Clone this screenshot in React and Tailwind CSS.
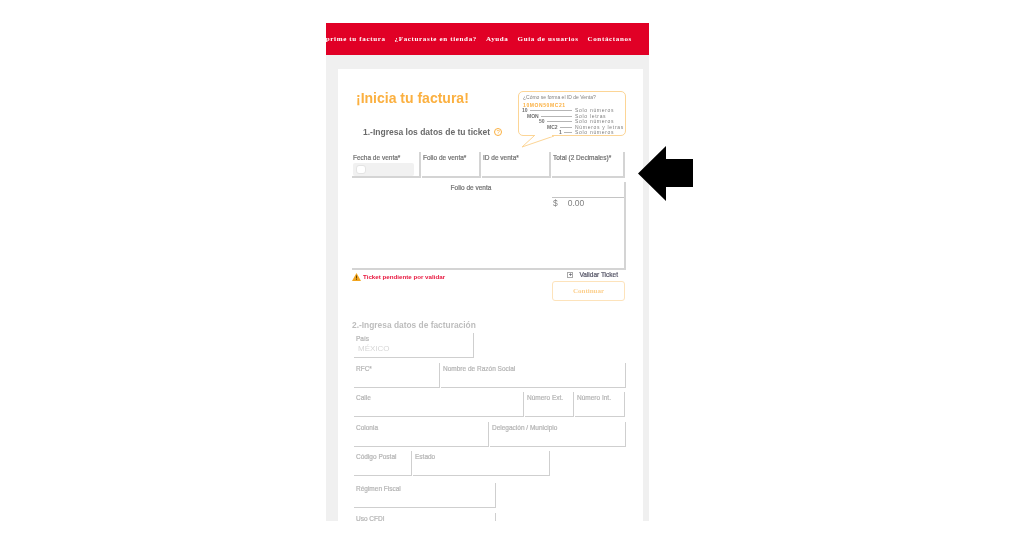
import React from "react";

const navItems = ["Imprime tu factura", "¿Facturaste en tienda?", "Ayuda", "Guía de usuarios", "Contáctanos"];

const idRows = [
  { code: "10", text: "Solo números", pad: "pl-0" },
  { code: "MON", text: "Solo letras", pad: "pl-[5px]" },
  { code: "50", text: "Solo números", pad: "pl-[17px]" },
  { code: "MC2", text: "Números y letras", pad: "pl-[25px]" },
  { code: "1", text: "Solo números", pad: "pl-[37px]" },
];

const TicketField = ({ label, width, children }) => (
  <div className={`${width} h-[26px] border-r-2 border-b-2 border-[#d4d4d4] pl-[1px] pt-[1px] text-[6.5px] leading-[9px] text-[#707070] [-webkit-text-stroke:0.2px_#707070]`}>
    {label}
    {children}
  </div>
);

const BillingField = ({ label, width, children }) => (
  <div className={`${width} h-[25px] shrink-0 border-r border-b border-[#cfcfcf] pl-[2px] pt-[2px] text-[6.5px] leading-[8px] text-[#b4b4b4] [-webkit-text-stroke:0.2px_#b4b4b4]`}>
    {label}
    {children}
  </div>
);

const IdBubble = () => (
  <div className="absolute left-[180px] top-[22px] h-[57px] w-[108px]">
    <div className="h-[45px] w-[108px] rounded-[5px] border border-[#fcd596] px-[3px] pt-[3px] text-[5px] leading-[5.5px] text-[#808080]">
      <div className="pl-[1px]">¿Cómo se forma el ID de Venta?</div>
      <div className="mt-[2px] pl-[1px] font-bold tracking-[0.6px] text-[#fbb040]">10MON50MC21</div>
      {idRows.map((row) => (
        <div key={row.code} className={`flex h-[5.5px] items-center ${row.pad}`}>
          <span className="font-bold text-[#707070]">{row.code}</span>
          <span className="mx-[2px] h-px flex-1 bg-[#b5b5b5]" />
          <span className="w-[48px] shrink-0 whitespace-nowrap pl-[1px] tracking-[0.7px]">{row.text}</span>
        </div>
      ))}
    </div>
    <svg className="absolute left-[0px] top-[44px]" width="40" height="14" viewBox="0 0 40 14">
      <path d="M16 1 L4 12 L36 1" fill="#fff" stroke="#fcd596" strokeWidth="1" />
      <path d="M17 0.5 L34 0.5" stroke="#fff" strokeWidth="2" />
    </svg>
  </div>
);

export default function App() {
  return (
    <div className="relative h-[536px] w-[1024px] overflow-hidden bg-white pl-[326px] pt-[23px] font-['Liberation_Sans',sans-serif] blur-[0.5px]">
      <div className="flex h-[498px] w-[323px] flex-col overflow-hidden bg-[#f0f0f0]">
        <nav className="flex h-[32px] shrink-0 items-center justify-end gap-[9px] whitespace-nowrap bg-[#e10026] pr-[17px] font-['Liberation_Serif',serif] text-[7px] font-bold tracking-[0.65px] text-white">
          {navItems.map((item) => (
            <span key={item}>{item}</span>
          ))}
        </nav>

        <main className="relative ml-[12px] mt-[14px] w-[305px] flex-1 overflow-hidden bg-white pl-[14px]">
          <IdBubble />

          <h1 className="ml-[4px] mt-[20px] text-[14px] font-bold leading-[19px] text-[#fbb040]">¡Inicia tu factura!</h1>

          <div className="ml-[11px] mt-[19px] flex items-center gap-[4px] text-[8.5px] font-bold leading-[10px] text-[#6a6a6a]">
            1.-Ingresa los datos de tu ticket
            <span className="flex h-[8px] w-[8px] items-center justify-center rounded-full border border-[#fbb040] text-[6px] font-normal leading-none text-[#fbb040]">?</span>
          </div>

          <div className="mt-[15px] flex w-[274px] gap-[1px]">
            <TicketField label="Fecha de venta*" width="w-[69px]">
              <div className="mt-[1px] flex h-[13px] w-[61px] items-center rounded-[2px] bg-[#f1f1f1] pl-[3px]">
                <span className="h-[9px] w-[10px] rounded-[3px] border border-[#e4e4e4] bg-white" />
              </div>
            </TicketField>
            <TicketField label="Folio de venta*" width="w-[59px]" />
            <TicketField label="ID de venta*" width="w-[69px]" />
            <TicketField label="Total (2 Decimales)*" width="w-[73px]" />
          </div>

          <div className="relative mt-[4px] h-[88px] w-[274px] border-r-2 border-b-2 border-[#d4d4d4]">
            <div className="w-[238px] pt-[2px] text-center text-[6.5px] leading-[8px] text-[#707070] [-webkit-text-stroke:0.2px_#707070]">Folio de venta</div>
            <div className="absolute left-[200px] top-[15px] flex h-[15px] w-[72px] gap-[10px] border-t border-[#c4c4c4] pl-[1px] text-[8.5px] leading-[11px] text-[#808080]">
              <span>$</span>
              <span>0.00</span>
            </div>
          </div>

          <div className="flex w-[274px] items-start justify-between">
            <div className="mt-[2px] flex items-center gap-[2px] text-[6.2px] font-bold leading-[10px] text-[#e8173f]">
              <svg width="9" height="8" viewBox="0 0 9 8">
                <path d="M4.5 0 L9 8 L0 8 Z" fill="#f2a51f" />
                <path d="M4.1 2.6 H4.9 V5.6 H4.1 Z M4.1 6.2 H4.9 V7 H4.1 Z" fill="#3a2a00" />
              </svg>
              Ticket pendiente por validar
            </div>
            <div className="flex flex-col items-end pr-[1px]">
              <div className="flex h-[9px] items-center text-[6.5px] text-[#556] [-webkit-text-stroke:0.2px_#556]">
                <span className="mr-[6px] flex h-[6px] w-[6px] items-center justify-center border border-[#aaa] text-[5px] leading-none text-[#666]">+</span>
                <span className="mr-[7px]">Validar Ticket</span>
              </div>
              <button className="mt-[2px] h-[20px] w-[73px] rounded-[3px] border border-[#fde3bb] font-['Liberation_Serif',serif] text-[7px] font-bold text-[#fcd08f]">
                Continuar
              </button>
            </div>
          </div>

          <h2 className="mt-[19px] text-[8.4px] font-bold leading-[11px] text-[#bdbdbd]">2.-Ingresa datos de facturación</h2>

          <div className="ml-[2px] mt-[2px] flex w-[272px] flex-col gap-[4.6px]">
            <BillingField label="País" width="w-[120px]">
              <div className="ml-[2px] mt-[1px] text-[8px] leading-[10px] text-[#d6d6d6] [-webkit-text-stroke:0]">MÉXICO</div>
            </BillingField>
            <div className="flex gap-[1px]">
              <BillingField label="RFC*" width="w-[86px]" />
              <BillingField label="Nombre de Razón Social" width="w-[185px]" />
            </div>
            <div className="flex gap-[1px]">
              <BillingField label="Calle" width="w-[170px]" />
              <BillingField label="Número Ext." width="w-[49px]" />
              <BillingField label="Número Int." width="w-[50px]" />
            </div>
            <div className="flex gap-[1px]">
              <BillingField label="Colonia" width="w-[135px]" />
              <BillingField label="Delegación / Municipio" width="w-[136px]" />
            </div>
            <div className="flex gap-[1px]">
              <BillingField label="Código Postal" width="w-[58px]" />
              <BillingField label="Estado" width="w-[137px]" />
            </div>
            <div className="mt-[2px]">
              <BillingField label="Régimen Fiscal" width="w-[142px]" />
            </div>
            <div>
              <BillingField label="Uso CFDI" width="w-[142px]" />
            </div>
          </div>
        </main>
      </div>

      <svg className="absolute left-[638px] top-[146px]" width="55" height="55" viewBox="0 0 55 55">
        <path d="M0 27.5 L28 0 V13 H55 V41 H28 V55 Z" fill="#000" />
      </svg>
    </div>
  );
}
